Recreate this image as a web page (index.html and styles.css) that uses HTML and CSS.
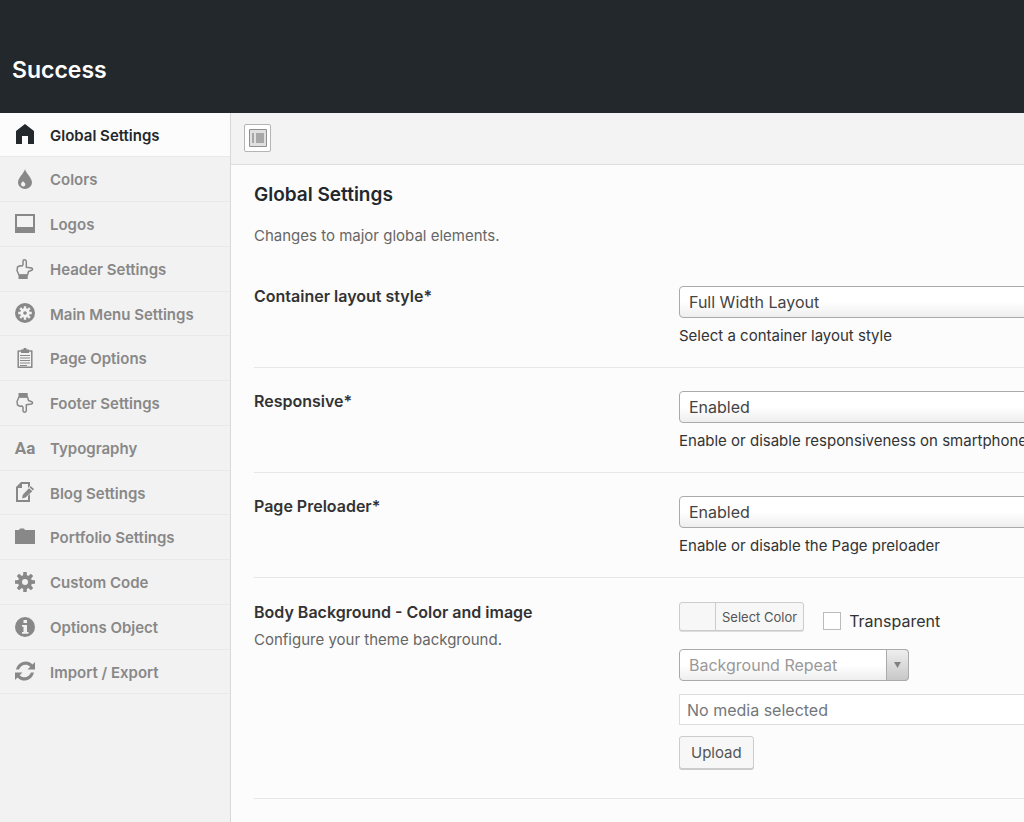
FILE: index.html
```html
<!DOCTYPE html>
<html lang="en">
<head>
<meta charset="utf-8">
<title>Success</title>
<meta name="viewport" content="width=device-width, initial-scale=1">
<link rel="stylesheet" href="styles.css">
</head>
<body>
<div class="page">
  <header class="header"><h1 class="brand">Success</h1></header>
  <div class="panel">
    <nav class="sidebar" aria-label="Settings sections">
      <ul class="menu">
        <li class="item"><a class="link active" href="#global" aria-current="page"><svg class="icon" viewBox="0 0 20 20"><path d="M10 0 19 7V20H13V12H7V20H1V7Z"/></svg><span>Global Settings</span></a></li>
        <li class="item"><a class="link" href="#colors"><svg class="icon" viewBox="0 0 20 20"><path fill-rule="evenodd" d="M10 0C11 4.500 17 8.500 17 13.500A7 6.500 0 0 1 3 13.500C3 8.500 9 4.500 10 0ZM8 12.300C6.800 13.500 6 14.300 6 15.300A2.200 2.200 0 0 0 10.400 15.300C10.400 14.300 9 13.500 8 12.300Z"/></svg><span>Colors</span></a></li>
        <li class="item"><a class="link" href="#logos"><svg class="icon" viewBox="0 0 20 20"><path fill-rule="evenodd" d="M0 0H20V19H0ZM2 2V13H18V2Z"/></svg><span>Logos</span></a></li>
        <li class="item"><a class="link" href="#header"><svg class="icon" viewBox="0 0 20 20"><path class="line" d="M4 16 2 11.500 2.500 8 4.500 6.800 7 7 8 5.800V2.200Q8 .8 9.500 .8T11.300 2.200V8.200L16.500 9Q18.500 10 16.700 11.300L13.500 12.500 12.500 16Z"/><path d="M3.500 15.500H12.700V20H3.500Z"/></svg><span>Header Settings</span></a></li>
        <li class="item"><a class="link" href="#menu"><svg class="icon" viewBox="0 0 20 20"><circle cx="10" cy="10" r="10"/><g class="cut"><circle cx="10" cy="10" r="4.700"/><path d="M8.800 3.200H11.200V16.800H8.800ZM3.200 8.800H16.800V11.200H3.200ZM4.350 6.050 6.050 4.350 15.650 13.950 13.950 15.650ZM13.950 4.350 15.650 6.050 6.050 15.650 4.350 13.950Z"/></g><circle cx="10" cy="10" r="1.800"/></svg><span>Main Menu Settings</span></a></li>
        <li class="item"><a class="link" href="#page"><svg class="icon" viewBox="0 0 20 20"><path class="line" d="M3.200 3H16.800V19.300H3.200Z"/><path d="M6 1.500H8.300A1.700 1.700 0 0 1 11.700 1.500H14V5H6ZM5 7H15V8H5ZM5 9.500H15V10.500H5ZM5 12H15V13H5ZM5 14.500H15V15.500H5ZM5 17H12V18H5Z"/></svg><span>Page Options</span></a></li>
        <li class="item"><a class="link" href="#footer"><svg class="icon" viewBox="0 0 20 20"><path class="line" d="M4 4 2 8.500 2.500 12 4.500 13.200 7 13 8 14.200V17.800Q8 19.200 9.500 19.200T11.300 17.800V11.800L16.500 11Q18.500 10 16.700 8.700L13.500 7.500 12.500 4Z"/><path d="M3.500 0H12.700V4.500H3.500Z"/></svg><span>Footer Settings</span></a></li>
        <li class="item"><a class="link" href="#typography"><span class="icon letters" aria-hidden="true">Aa</span><span>Typography</span></a></li>
        <li class="item"><a class="link" href="#blog"><svg class="icon" viewBox="0 0 20 20"><path d="M6 0H15V4L13 6V2H7V6H3V18H13V14L15 12V20H1V5Z"/><path d="M15.500 4 19 7 18 8.500 14.700 5.400ZM14 6.200 17.300 9.300 10.500 15.500 7 16.500 7.800 12.700Z"/></svg><span>Blog Settings</span></a></li>
        <li class="item"><a class="link" href="#portfolio"><svg class="icon" viewBox="0 0 20 20"><path d="M0 3H4L5 1.500H9L10 3H20V17H0Z"/></svg><span>Portfolio Settings</span></a></li>
        <li class="item"><a class="link" href="#code"><svg class="icon" viewBox="0 0 20 20"><circle cx="10" cy="10" r="7"/><path d="M8.300 0H11.700L12 5H8ZM8.300 20H11.700L12 15H8ZM0 8.300V11.700L5 12V8ZM20 8.300V11.700L15 12V8ZM1.800 4.100 4.100 1.800 8 5 5 8ZM18.200 15.900 15.900 18.200 12 15 15 12ZM15.900 1.800 18.200 4.100 15 8 12 5ZM4.100 18.200 1.800 15.900 5 12 8 15Z"/><circle class="cut" cx="10" cy="10" r="3"/></svg><span>Custom Code</span></a></li>
        <li class="item"><a class="link" href="#object"><svg class="icon" viewBox="0 0 20 20"><circle cx="10" cy="10" r="10"/><path class="cut" d="M8.500 3H12V6H8.500ZM7 8H12V15H13.500V16.800H7V15H8.500V9.800H7Z"/></svg><span>Options Object</span></a></li>
        <li class="item"><a class="link" href="#import"><svg class="icon" viewBox="0 0 20 20"><path d="M1 8.500C3 0 13-2 17.500 3.500L20 1V8.500H12.500L15.300 5.700C11.500 2 6 3.500 4 8.500ZM19 11.500C17 20 7 22 2.500 16.500L0 19V11.500H7.500L4.700 14.300C8.500 18 14 16.500 16 11.500Z"/></svg><span>Import / Export</span></a></li>
      </ul>
    </nav>
    <main class="main">
      <div class="toolbar">
        <button class="expand" type="button" aria-label="Expand options"><svg class="expand-icon" viewBox="0 0 18 18"><path class="frame" d="M.5 .5H17.500V17.500H.5Z"/><path class="pane" d="M3 4H5V14H3ZM7 4H15V14H7Z"/></svg></button>
      </div>
      <form class="content">
        <h2 class="title">Global Settings</h2>
        <p class="intro">Changes to major global elements.</p>
        <div class="row">
          <label class="label" for="layout">Container layout style*</label>
          <div class="field"><select class="select" id="layout"><option>Full Width Layout</option></select><p class="help">Select a container layout style</p></div>
        </div>
        <div class="row">
          <label class="label" for="responsive">Responsive*</label>
          <div class="field"><select class="select" id="responsive"><option>Enabled</option></select><p class="help">Enable or disable responsiveness on smartphones</p></div>
        </div>
        <div class="row">
          <label class="label" for="preloader">Page Preloader*</label>
          <div class="field"><select class="select" id="preloader"><option>Enabled</option></select><p class="help">Enable or disable the Page preloader</p></div>
        </div>
        <div class="row background">
          <div class="caption"><label class="label" for="media">Body Background - Color and image</label><p class="note">Configure your theme background.</p></div>
          <div class="field stack">
            <div class="color-line">
              <button class="color" type="button"><span class="swatch"></span><span class="color-text">Select Color</span></button>
              <label class="check"><input class="box" type="checkbox"><span>Transparent</span></label>
            </div>
            <div class="repeat">
              <select class="select muted" aria-label="Background Repeat"><option>Background Repeat</option></select>
              <span class="arrow" aria-hidden="true"><svg class="caret" viewBox="0 0 8 7"><path d="M0 0H8L4 7Z"/></svg></span>
            </div>
            <input class="media" id="media" type="text" placeholder="No media selected" readonly>
            <button class="upload" type="button">Upload</button>
          </div>
        </div>
      </form>
    </main>
  </div>
</div>
</body>
</html>
```
FILE: styles.css
```css
* { box-sizing: border-box; }
body {
  margin: 0;
  background: #fcfcfc;
  color: #333;
  font: 15px/24px Inter, "Liberation Sans", sans-serif;
}
h1, h2, p, ul { margin: 0; padding: 0; }
button, input, select { font: inherit; color: inherit; margin: 0; }
.page { display: flex; flex-direction: column; min-height: 100vh; overflow: hidden; }
.header { background: #23282d; padding: 54px 12px 27px; }
.brand { color: #fff; font-size: 23px; line-height: 32px; font-weight: 600; }
.panel { display: flex; flex: 1; }
.sidebar { flex: 0 0 231px; background: #f2f2f2; border-right: 1px solid #d8d8d8; }
.menu { list-style: none; }
.item { height: 45px; }
.item:nth-child(4n+1) { height: 44px; }
.link {
  display: flex;
  align-items: center;
  gap: 15px;
  height: 100%;
  padding: 2px 0 0 15px;
  border-bottom: 1px solid #e9e9e9;
  color: #888;
  font-weight: 600;
  text-decoration: none;
}
.active { background: #fcfcfc; color: #23282d; }
.icon { flex: none; width: 20px; height: 20px; margin-bottom: 3px; fill: currentColor; }
.line { fill: none; stroke: currentColor; stroke-width: 1.5; stroke-linejoin: round; }
.cut { fill: #f2f2f2; }
.letters { display: flex; align-items: center; justify-content: center; font: 700 17px/20px Roboto, sans-serif; }
.main { flex: 1 0 960px; }
.toolbar { padding: 11px 13px 12px; background: #f3f3f3; border-bottom: 1px solid #dedede; }
.expand { display: flex; align-items: center; justify-content: center; width: 27px; height: 28px; padding: 0; background: #fff; border: 1px solid #b5b5b5; border-radius: 2px; }
.expand-icon { width: 18px; height: 18px; }
.frame { fill: #e0e0e0; stroke: #909090; }
.pane { fill: #a8a8a8; }
.content { padding: 18px 23px; }
.title { color: #23282d; font-size: 19px; line-height: 24px; font-weight: 600; }
.intro { margin: 17px 0 15px; color: #666; }
.row { display: grid; grid-template-columns: 425px 1fr; padding: 23px 0 19px; border-bottom: 1px solid #e7e7e7; }
.label { align-self: start; font-size: 16px; font-weight: 600; line-height: 20px; }
.field { min-width: 0; }
.select {
  display: block;
  appearance: none;
  width: 100%;
  height: 32px;
  padding: 0 9px;
  border: 1px solid #aaa;
  border-radius: 4px;
  background: linear-gradient(#fff 50%, #eee);
  color: #444;
  font-size: 16px;
}
.help { margin-top: 6px; }
.caption { display: flex; flex-direction: column; }
.note { margin-top: 6px; color: #666; }
.background { padding: 24px 0 29px; }
.stack { display: flex; flex-direction: column; align-items: flex-start; }
.color-line { display: flex; align-items: flex-start; gap: 19px; }
.color { display: flex; height: 29px; padding: 0; background: #f7f7f7; border: 1px solid #ccc; border-radius: 3px; box-shadow: 0 1px 0 #ddd; overflow: hidden; }
.swatch { width: 36px; height: 100%; border-right: 1px solid #ccc; }
.color-text { padding: 0 6px; font-size: 13px; line-height: 28px; color: #555; }
.check { display: flex; align-items: center; gap: 8px; padding-top: 7px; font-size: 16px; }
.box { appearance: none; width: 18px; height: 18px; background: #fff; border: 1px solid #bbb; }
.repeat { position: relative; width: 230px; margin-top: 16px; }
.muted { color: #999; }
.arrow { position: absolute; top: 0; right: 0; bottom: 0; display: flex; align-items: center; justify-content: center; width: 23px; border: 1px solid #aaa; border-radius: 0 4px 4px 0; background: linear-gradient(#eee, #c8c8c8); pointer-events: none; }
.caret { width: 7px; height: 6px; fill: #808080; }
.media { width: 100%; height: 31px; margin: 13px 0 11px; padding: 0 7px; background: #fff; border: 1px solid #ddd; font-size: 16px; }
.media::placeholder { color: #72777c; opacity: 1; }
.upload { height: 33px; padding: 0 11px; background: #f7f7f7; border: 1px solid #ccc; border-radius: 3px; box-shadow: 0 1px 0 #ccc; color: #555; }
```
